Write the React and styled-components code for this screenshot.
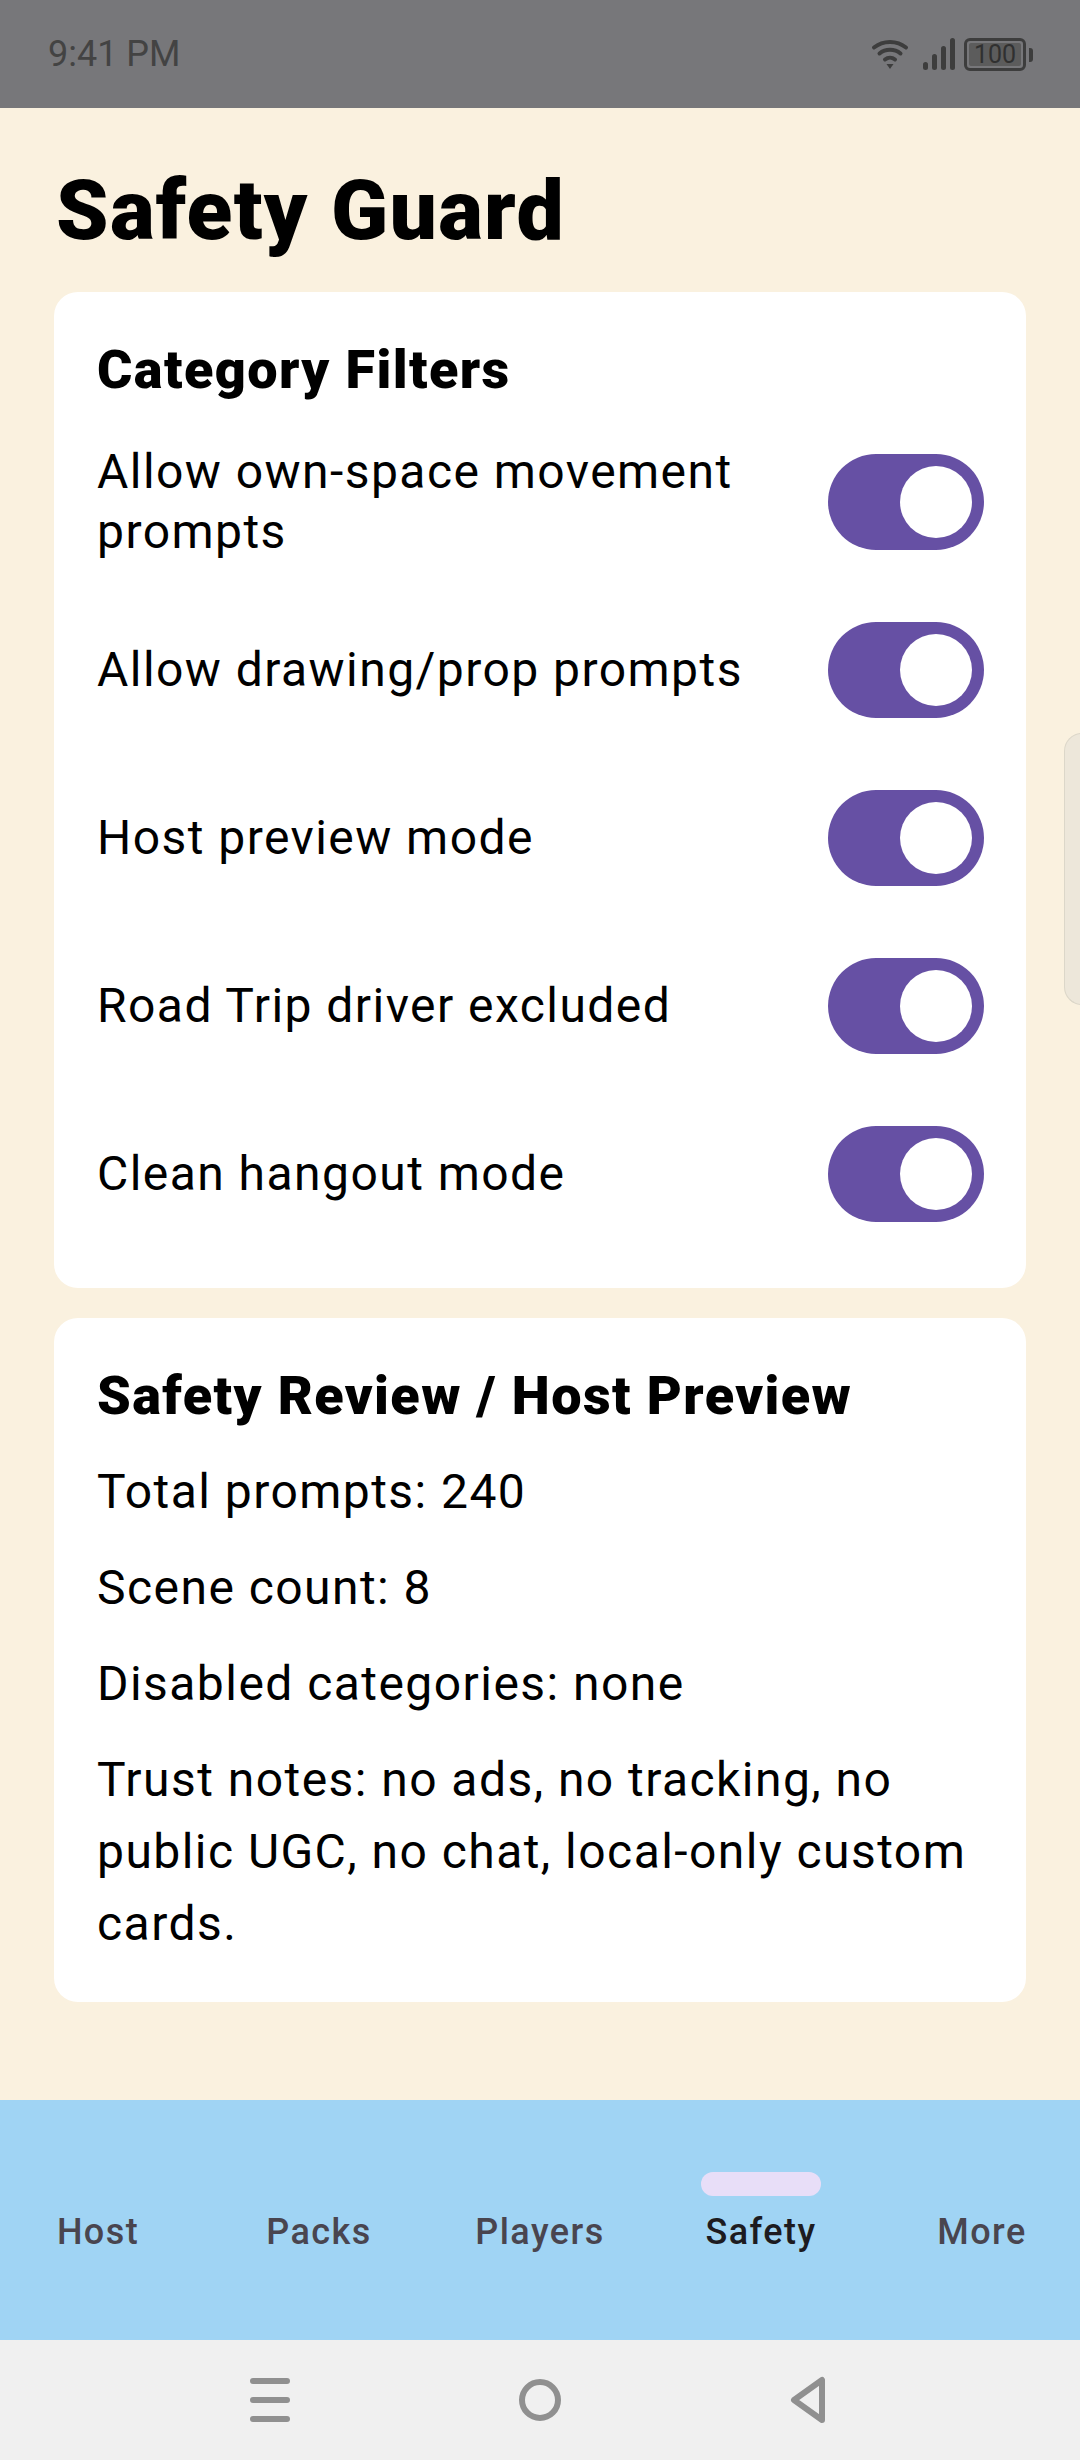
import React from "react";
import styled, { createGlobalStyle } from "styled-components";

const GlobalStyle = createGlobalStyle`
  html, body { margin: 0; padding: 0; background: #faf1df; }
  * { box-sizing: border-box; }
`;

const Screen = styled.div`
  position: relative;
  width: 1080px;
  height: 2460px;
  display: flex;
  flex-direction: column;
  overflow: hidden;
  background: #faf1df;
  font-family: Roboto, "Noto Sans", sans-serif;
`;

const StatusBar = styled.div`
  height: 108px;
  flex: none;
  display: flex;
  align-items: center;
  justify-content: space-between;
  padding: 0 54px 0 48px;
  background: #77777a;
  color: #434343;
`;

const Clock = styled.span`
  font-size: 36px;
  font-weight: 400;
  line-height: 108px;
`;

const StatusIcons = styled.div`
  display: flex;
  align-items: center;
  height: 34px;
`;

const Wifi = styled.svg`
  width: 38px;
  height: 30px;
  margin-right: 14px;
`;

const Signal = styled.svg`
  width: 32px;
  height: 32px;
  margin-right: 9px;
`;

const Battery = styled.div`
  position: relative;
  width: 62px;
  height: 33px;
  padding: 2px;
  border: 3px solid #3d3d3d;
  border-radius: 6px;
  &::after {
    content: "";
    position: absolute;
    right: -10px;
    top: 7px;
    width: 4px;
    height: 14px;
    border-radius: 0 3px 3px 0;
    background: #3d3d3d;
  }
`;

const BatteryLevel = styled.div`
  height: 100%;
  border-radius: 2px;
  background: #5c5c5c;
  color: #303030;
  font-size: 25px;
  font-weight: 400;
  line-height: 23px;
  text-align: center;
`;

const Main = styled.main`
  flex: 1;
  padding: 0 54px;
`;

const Title = styled.h1`
  margin: 52px 0 30px;
  padding-left: 2px;
  color: #000;
  font-size: 84px;
  font-weight: 900;
  letter-spacing: 1.3px;
  line-height: 102px;
`;

const Card = styled.section`
  margin-bottom: 30px;
  padding: 42px 42px ${(p) => p.$bottom}px 43px;
  border-radius: 24px;
  background: #fff;
`;

const CardTitle = styled.h2`
  margin: 0 0 ${(p) => p.$gap}px;
  color: #000;
  font-size: 54px;
  font-weight: 900;
  letter-spacing: 1.4px;
  line-height: 72px;
`;

const ToggleList = styled.div`
  display: grid;
  grid-auto-rows: 168px;
`;

const ToggleRow = styled.div`
  display: flex;
  align-items: center;
  justify-content: space-between;
  gap: 48px;
`;

const ToggleLabel = styled.span`
  color: #000;
  font-size: 48px;
  font-weight: 400;
  letter-spacing: 1.45px;
  line-height: 60px;
`;

const Switch = styled.div`
  width: 156px;
  height: 96px;
  flex: none;
  display: flex;
  align-items: center;
  justify-content: flex-end;
  padding-right: 12px;
  border-radius: 48px;
  background: #6650a4;
`;

const Thumb = styled.div`
  width: 72px;
  height: 72px;
  border-radius: 50%;
  background: #fff;
`;

const Facts = styled.div`
  display: flex;
  flex-direction: column;
  gap: 24px;
`;

const Fact = styled.p`
  margin: 0;
  color: #000;
  font-size: 48px;
  font-weight: 400;
  letter-spacing: 1.45px;
  line-height: 72px;
`;

const EdgeHandle = styled.div`
  position: absolute;
  top: 733px;
  right: -2px;
  width: 18px;
  height: 272px;
  border: 1px solid #dcd7c9;
  border-radius: 18px 0 0 18px;
  background: #ede7da;
`;

const TabBar = styled.nav`
  height: 240px;
  flex: none;
  display: flex;
  justify-content: space-between;
  padding: 72px 8px 0;
  background: #a0d4f4;
`;

const Tab = styled.div`
  width: 180px;
  display: flex;
  flex-direction: column;
  align-items: center;
  gap: 12px;
`;

const Indicator = styled.div`
  width: 120px;
  height: 24px;
  border-radius: 24px;
  background: ${(p) => (p.$active ? "#e8def8" : "transparent")};
`;

const TabLabel = styled.span`
  color: ${(p) => (p.$active ? "#1d1b20" : "#49454f")};
  font-size: 36px;
  font-weight: 500;
  letter-spacing: 1.44px;
  line-height: 48px;
`;

const NavBar = styled.div`
  height: 120px;
  flex: none;
  display: flex;
  align-items: center;
  justify-content: center;
  gap: 210px;
  background: #f0f0f0;
`;

const NavIcon = styled.svg`
  width: 60px;
  height: 60px;
  fill: none;
  stroke: #909090;
  stroke-width: 6;
  stroke-linecap: round;
  stroke-linejoin: round;
`;

const toggles = [
  "Allow own-space movement prompts",
  "Allow drawing/prop prompts",
  "Host preview mode",
  "Road Trip driver excluded",
  "Clean hangout mode",
];

const facts = [
  "Total prompts: 240",
  "Scene count: 8",
  "Disabled categories: none",
  "Trust notes: no ads, no tracking, no public UGC, no chat, local-only custom cards.",
];

const tabs = ["Host", "Packs", "Players", "Safety", "More"];

const App = () => {
  return (
    <Screen>
      <GlobalStyle />
      <StatusBar>
        <Clock>9:41 PM</Clock>
        <StatusIcons>
          <Wifi viewBox="0 0 38 30" fill="none" stroke="#3d3d3d" strokeWidth="4" strokeLinecap="round">
            <path d="M3 8.5C12 1 26 1 35 8.5" />
            <path d="M8.5 14.5C14.5 9.5 23.5 9.5 29.5 14.5" />
            <path d="M14 20.5C17 18 21 18 24 20.5" />
            <path d="M15.5 25h7L19 30z" fill="#3d3d3d" stroke="none" />
          </Wifi>
          <Signal viewBox="0 0 32 32" fill="#3d3d3d">
            <rect x="0" y="24" width="5" height="8" rx="2.5" />
            <rect x="9" y="16" width="5" height="16" rx="2.5" />
            <rect x="18" y="8" width="5" height="24" rx="2.5" />
            <rect x="27" y="0" width="5" height="32" rx="2.5" />
          </Signal>
          <Battery>
            <BatteryLevel>100</BatteryLevel>
          </Battery>
        </StatusIcons>
      </StatusBar>
      <Main>
        <Title>Safety Guard</Title>
        <Card $bottom={30}>
          <CardTitle $gap={12}>Category Filters</CardTitle>
          <ToggleList>
            {toggles.map((label) => (
              <ToggleRow key={label}>
                <ToggleLabel>{label}</ToggleLabel>
                <Switch>
                  <Thumb />
                </Switch>
              </ToggleRow>
            ))}
          </ToggleList>
        </Card>
        <Card $bottom={42}>
          <CardTitle $gap={24}>Safety Review / Host Preview</CardTitle>
          <Facts>
            {facts.map((text) => (
              <Fact key={text}>{text}</Fact>
            ))}
          </Facts>
        </Card>
      </Main>
      <EdgeHandle />
      <TabBar>
        {tabs.map((tab) => (
          <Tab key={tab}>
            <Indicator $active={tab === "Safety"} />
            <TabLabel $active={tab === "Safety"}>{tab}</TabLabel>
          </Tab>
        ))}
      </TabBar>
      <NavBar>
        <NavIcon viewBox="0 0 60 60">
          <path d="M13 11h34M13 30h34M13 49h34" />
        </NavIcon>
        <NavIcon viewBox="0 0 60 60">
          <circle cx="30" cy="30" r="18" />
        </NavIcon>
        <NavIcon viewBox="0 0 60 60">
          <path d="M42 10v40L14 30z" />
        </NavIcon>
      </NavBar>
    </Screen>
  );
};

export default App;
